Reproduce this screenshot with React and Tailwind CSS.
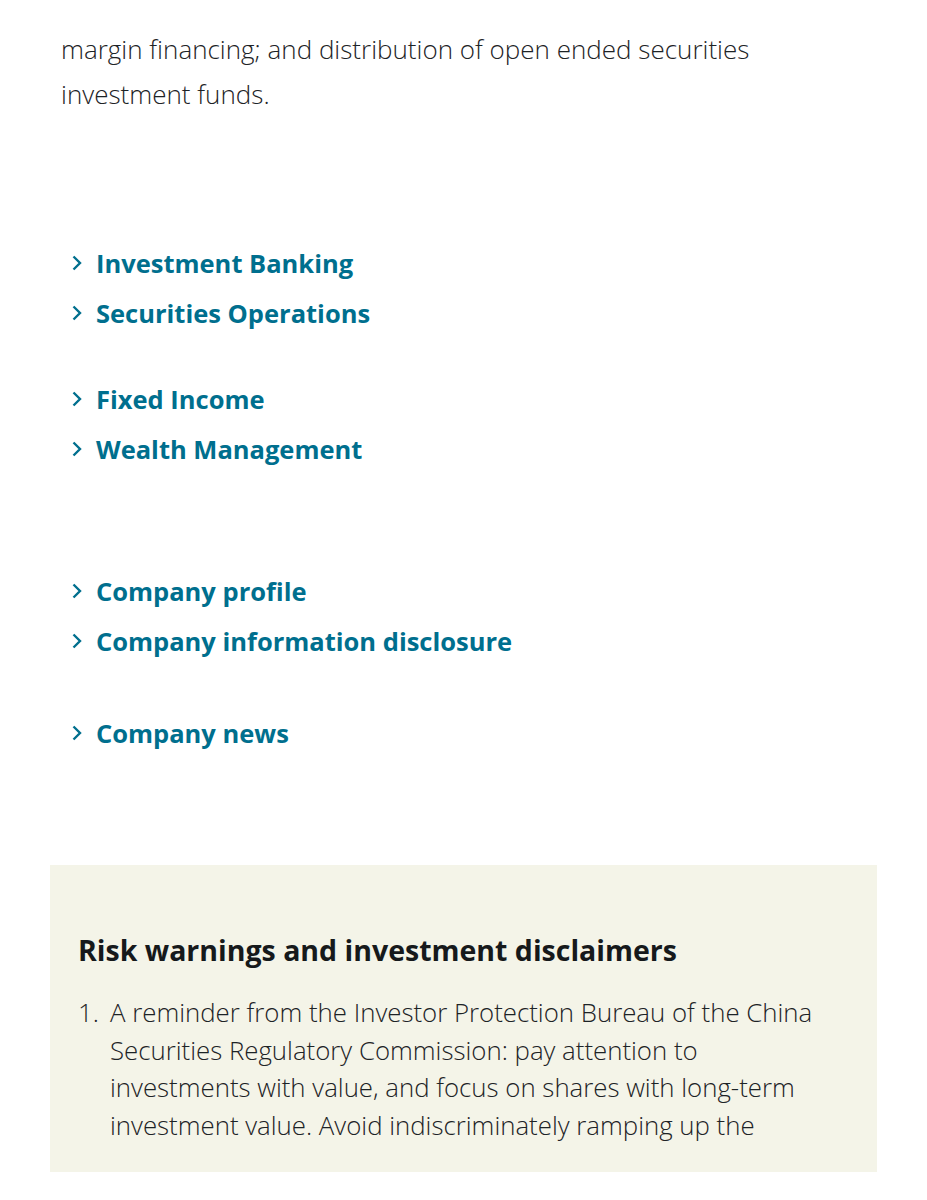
const groups = [
    ['Investment Banking', 'Securities Operations'],
    ['Fixed Income', 'Wealth Management'],
    ['Company profile', 'Company information disclosure'],
    ['Company news'],
];

const gaps = ['mt-[121px]', 'mt-[36px]', 'mt-[92px]', 'mt-[42px]'];

function Chevron() {
    return (
        <svg width="10" height="16" viewBox="0 0 10 16" className="shrink-0" fill="none">
            <polyline points="1.5,1.5 8,8 1.5,14.5" stroke="currentColor" strokeWidth="2.4" />
        </svg>
    );
}

function NavLink({ label }) {
    return (
        <a href="#" className="flex h-[50px] items-center gap-[14px] text-[#006f8e] font-bold text-[25.5px]">
            <Chevron />
            <span>{label}</span>
        </a>
    );
}

export default function App() {
    return (
        <div
            className="min-h-[1200px] bg-white text-[#1d2326]"
            style={{ fontFamily: '"Open Sans", "Noto Sans", sans-serif' }}
        >
            <p className="pl-[61px] pr-[80px] pt-[27px] text-[26px] leading-[45px] font-light">
                margin financing; and distribution of open ended securities
                <br />
                investment funds.
            </p>

            <div className="pl-[72px]">
                {groups.map((g, i) => (
                    <div key={i} className={gaps[i]}>
                        {g.map((l) => (
                            <NavLink key={l} label={l} />
                        ))}
                    </div>
                ))}
            </div>

            <section className="mx-[50px] mt-[107px] h-[307px] bg-[#f4f4e8] pl-[28px] pr-[30px] pt-[67px]">
                <h2 className="text-[28.5px] leading-[36px] font-bold text-[#16191b]">
                    Risk warnings and investment disclaimers
                </h2>
                <ol className="mt-[26px] text-[25.8px] leading-[37.5px] font-light">
                    <li className="flex">
                        <span className="w-[32px] shrink-0">1.</span>
                        <span className="max-w-[716px]">
                            A reminder from the Investor Protection Bureau of the China Securities Regulatory
                            Commission: pay attention to investments with value, and focus on shares with long-term
                            investment value. Avoid indiscriminately ramping up the
                        </span>
                    </li>
                </ol>
            </section>
        </div>
    );
}
